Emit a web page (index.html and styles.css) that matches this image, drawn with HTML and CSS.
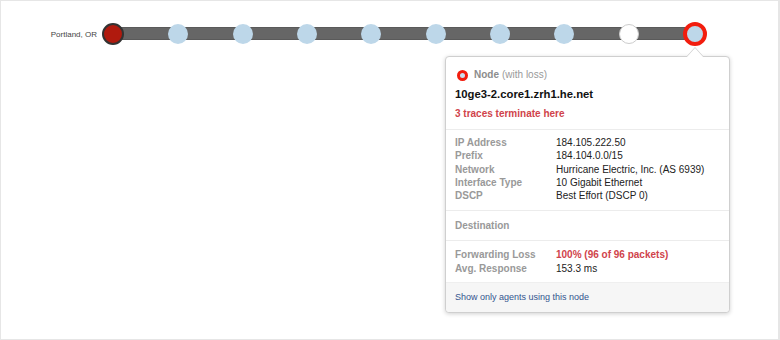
FILE: index.html
```html
<!DOCTYPE html>
<html lang="en">
<head>
    <meta charset="UTF-8">
    <meta name="viewport" content="width=device-width, initial-scale=1.0">
    <title>Path Visualization</title>
    <link rel="stylesheet" href="styles.css">
</head>
<body>
    <div class="path-frame">
        <div class="path-row">
            <span class="path-agent">Portland, OR</span>
            <div class="path-track">
                <span class="node node-agent"></span>
                <span class="node"></span>
                <span class="node"></span>
                <span class="node"></span>
                <span class="node"></span>
                <span class="node"></span>
                <span class="node"></span>
                <span class="node"></span>
                <span class="node node-unknown"></span>
                <span class="node node-loss"></span>
            </div>
        </div>

        <!-- node details popover -->
        <div class="node-popover">
            <div class="pop-section pop-head">
                <div class="pop-kind"><span class="loss-icon"></span><b>Node</b> (with loss)</div>
                <div class="pop-title">10ge3-2.core1.zrh1.he.net</div>
                <div class="pop-warn">3 traces terminate here</div>
            </div>
            <div class="pop-section pop-rows">
                <div class="pop-row"><span class="pop-label">IP Address</span><span>184.105.222.50</span></div>
                <div class="pop-row"><span class="pop-label">Prefix</span><span>184.104.0.0/15</span></div>
                <div class="pop-row"><span class="pop-label">Network</span><span>Hurricane Electric, Inc. (AS 6939)</span></div>
                <div class="pop-row"><span class="pop-label">Interface Type</span><span>10 Gigabit Ethernet</span></div>
                <div class="pop-row"><span class="pop-label">DSCP</span><span>Best Effort (DSCP 0)</span></div>
            </div>
            <div class="pop-section pop-dest">
                <span class="pop-label">Destination</span>
            </div>
            <div class="pop-section pop-rows pop-stats">
                <div class="pop-row"><span class="pop-label">Forwarding Loss</span><span class="pop-bad">100% (96 of 96 packets)</span></div>
                <div class="pop-row"><span class="pop-label">Avg. Response</span><span>153.3 ms</span></div>
            </div>
            <div class="pop-foot">
                <a href="#">Show only agents using this node</a>
            </div>
        </div>
    </div>
</body>
</html>
```

FILE: styles.css
```css
body {
    margin: 0;
    font-family: "Liberation Sans", Arial, sans-serif;
    background: #fff;
}

.path-frame {
    position: relative;
    box-sizing: border-box;
    width: 780px;
    height: 340px;
    border: 1px solid #e6e6e6;
    border-right-width: 2px;
    padding-top: 21px;
}

.path-row {
    display: flex;
    align-items: center;
    height: 24px;
}

.path-agent {
    width: 97px;
    padding-right: 1px;
    box-sizing: border-box;
    text-align: right;
    font-size: 8px;
    color: #444;
}

.path-track {
    position: relative;
    display: flex;
    justify-content: space-between;
    align-items: center;
    width: 605px;
    margin-left: 4px;
}

.path-track::before {
    content: "";
    position: absolute;
    left: 11px;
    right: 12px;
    top: 5px;
    height: 11px;
    background: #666;
    border-top: 1px solid #5a5a5a;
    border-bottom: 1px solid #5a5a5a;
}

.node {
    position: relative;
    width: 20px;
    height: 20px;
    border-radius: 50%;
    background: #bdd7e9;
}

.node-agent {
    width: 18px;
    height: 18px;
    background: #b01a0e;
    border: 2px solid #333;
}

.node-unknown {
    box-sizing: border-box;
    background: #fff;
    border: 1px solid #ccc;
}

.node-loss {
    width: 16px;
    height: 16px;
    border: 4px solid #f21d0e;
}

/* popover */
.node-popover {
    position: absolute;
    left: 444px;
    top: 55px;
    width: 283px;
    background: #fff;
    border: 1px solid #cfcfcf;
    border-radius: 4px;
    box-shadow: 0 1px 4px rgba(0, 0, 0, 0.18);
    font-size: 10px;
    color: #222;
}

.node-popover::before,
.node-popover::after {
    content: "";
    position: absolute;
    left: 240px;
    border: 9px solid transparent;
    border-top: 0;
}

.node-popover::before {
    top: -10px;
    border-bottom: 10px solid #cfcfcf;
}

.node-popover::after {
    top: -9px;
    border-bottom: 10px solid #fff;
}

.pop-section {
    padding: 0 9px;
    border-bottom: 1px solid #ececec;
}

.pop-head {
    padding-top: 11px;
    padding-bottom: 8px;
}

.pop-kind {
    display: flex;
    align-items: center;
    line-height: 14px;
    color: #999;
}

.pop-kind b {
    margin-right: 3px;
    color: #8c8c8c;
}

.loss-icon {
    width: 5px;
    height: 5px;
    margin: 0 6px 0 2px;
    border-radius: 50%;
    background: #cbdfee;
    border: 3px solid #f21d0e;
}

.pop-title {
    margin-top: 3px;
    font-size: 11.3px;
    line-height: 19px;
    font-weight: bold;
    color: #111;
}

.pop-warn {
    margin-top: 3px;
    line-height: 14px;
    font-weight: bold;
    color: #d0434b;
}

.pop-rows {
    padding-top: 6px;
    padding-bottom: 8px;
}

.pop-row {
    display: flex;
    line-height: 13.3px;
}

.pop-label {
    width: 101px;
    flex: none;
    font-weight: bold;
    color: #999;
}

.pop-dest {
    padding-top: 8px;
    padding-bottom: 7px;
    line-height: 14px;
}

.pop-stats {
    padding-top: 7px;
    padding-bottom: 7px;
    border-bottom: 0;
}

.pop-bad {
    font-weight: bold;
    color: #d0434b;
}

.pop-foot {
    padding: 7px 9px 8px;
    line-height: 14px;
    font-size: 9px;
    background: #f6f6f6;
    border-top: 1px solid #efefef;
    border-radius: 0 0 4px 4px;
}

.pop-foot a {
    color: #34558f;
    text-decoration: none;
}
```
